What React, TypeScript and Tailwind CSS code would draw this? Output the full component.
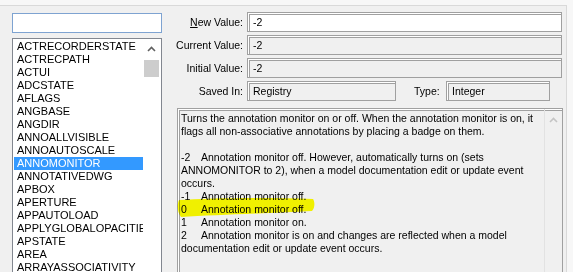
import React from "react";

const vars = [
  "ACTRECORDERSTATE",
  "ACTRECPATH",
  "ACTUI",
  "ADCSTATE",
  "AFLAGS",
  "ANGBASE",
  "ANGDIR",
  "ANNOALLVISIBLE",
  "ANNOAUTOSCALE",
  "ANNOMONITOR",
  "ANNOTATIVEDWG",
  "APBOX",
  "APERTURE",
  "APPAUTOLOAD",
  "APPLYGLOBALOPACITIES",
  "APSTATE",
  "AREA",
  "ARRAYASSOCIATIVITY",
  "ATTDIA",
];

const sunken =
  "border border-[#a0a0a0] shadow-[inset_1px_1px_0_#ffffff,inset_2px_2px_0_#a0a0a0]";

function UpArrow({ color }: { color: string }) {
  return (
    <svg width="9" height="6" viewBox="0 0 9 6">
      <path d="M1 5 L4.5 1.5 L8 5" fill="none" stroke={color} strokeWidth="1.6" />
    </svg>
  );
}

function Label({ children }: { children: React.ReactNode }) {
  return <div className="w-[66px] flex justify-end whitespace-nowrap">{children}</div>;
}

function Field({ label, value, white, underline }: { label: string; value: string; white?: boolean; underline?: boolean }) {
  return (
    <div className="flex items-center h-[20px]">
      <Label>
        {underline ? (
          <span>
            <span className="underline">{label[0]}</span>
            {label.slice(1)}
          </span>
        ) : (
          <span>{label}</span>
        )}
      </Label>
      <div
        className={`ml-[4px] w-[315px] h-[20px] pl-[5px] flex items-center ${sunken} ${
          white ? "bg-white" : "bg-[#f0f0f0]"
        }`}
      >
        {value}
      </div>
    </div>
  );
}

function Line({ n, children }: { n?: string; children: React.ReactNode }) {
  return (
    <p className="h-[13px] whitespace-nowrap">
      {n !== undefined && <span className="inline-block w-[20px]">{n}</span>}
      {children}
    </p>
  );
}

export default function App() {
  return (
    <div className="w-[573px] h-[272px] overflow-hidden bg-[#f7f7f7] font-['Liberation_Sans',Arial,sans-serif] text-[11px] leading-[13px] text-black">
      <div className="mt-[5px] mr-[6px] h-[290px] border-t border-r border-[#d9d9d9] bg-[#f0f0f0] flex">
        {/* variable list */}
        <div className="pl-[12px] pt-[7px] w-[162px] flex flex-col">
          <div className="shrink-0 h-[20px] border border-[#7ea3d1] bg-white" />
          <div className="mt-[5px] h-[250px] shrink-0 overflow-hidden border border-[#828790] bg-white flex">
            <div className="w-[130px] pl-[1px] pt-[1px]">
              {vars.map((v) => (
                <div
                  key={v}
                  className={`h-[13px] pl-[3px] whitespace-nowrap overflow-hidden ${
                    v === "ANNOMONITOR" ? "bg-[#3399ff] text-white" : ""
                  }`}
                >
                  {v}
                </div>
              ))}
            </div>
            <div className="w-[17px] flex flex-col items-center">
              <div className="h-[17px] flex items-center justify-center mt-[1px]">
                <UpArrow color="#606060" />
              </div>
              <div className="mt-[3px] w-[15px] h-[17px] bg-[#cdcdcd]" />
            </div>
          </div>
        </div>

        {/* details */}
        <div className="ml-[15px] pt-[6px] w-[386px] flex flex-col text-[10.5px]">
          <div className="flex flex-col gap-[3px]">
            <Field label="New Value:" value="-2" white underline />
            <Field label="Current Value:" value="-2" />
            <Field label="Initial Value:" value="-2" />
            <div className="flex items-center h-[20px]">
              <Label>Saved In:</Label>
              <div className={`ml-[4px] w-[149px] h-[20px] pl-[5px] flex items-center bg-[#f0f0f0] ${sunken}`}>
                Registry
              </div>
              <div className="ml-[18px] w-[29px]">Type:</div>
              <div className={`ml-[3px] w-[104px] h-[20px] pl-[5px] flex items-center bg-[#f0f0f0] ${sunken}`}>
                Integer
              </div>
            </div>
          </div>

          <div className={`mt-[7px] h-[180px] shrink-0 flex bg-[#f0f0f0] ${sunken}`}>
            <div className="relative flex-1 pl-[3px] pt-[3px]">
              <svg
                className="absolute left-[-1px] top-[87px] mix-blend-multiply"
                width="140"
                height="24"
                viewBox="0 0 140 24"
              >
                <path
                  d="M2 4 C30 2 90 1 136 3 C138 6 138 12 135 15 C100 17 40 19 4 21 C0 16 0 8 2 4 Z"
                  fill="#ffff00"
                />
              </svg>
              <div className="relative">
                <Line>Turns the annotation monitor on or off. When the annotation monitor is on, it</Line>
                <Line>flags all non-associative annotations by placing a badge on them.</Line>
                <Line>{""}</Line>
                <Line n="-2">Annotation monitor off. However, automatically turns on (sets</Line>
                <Line>ANNOMONITOR to 2), when a model documentation edit or update event</Line>
                <Line>occurs.</Line>
                <Line n="-1">Annotation monitor off.</Line>
                <Line n="0">Annotation monitor off.</Line>
                <Line n="1">Annotation monitor on.</Line>
                <Line n="2">Annotation monitor is on and changes are reflected when a model</Line>
                <Line>documentation edit or update event occurs.</Line>
              </div>
            </div>
            <div className="w-[18px] border-l border-[#e2e2e2] flex flex-col items-center">
              <div className="h-[17px] mt-[2px] flex items-center justify-center">
                <UpArrow color="#c4c4c4" />
              </div>
            </div>
          </div>
        </div>
      </div>
    </div>
  );
}
